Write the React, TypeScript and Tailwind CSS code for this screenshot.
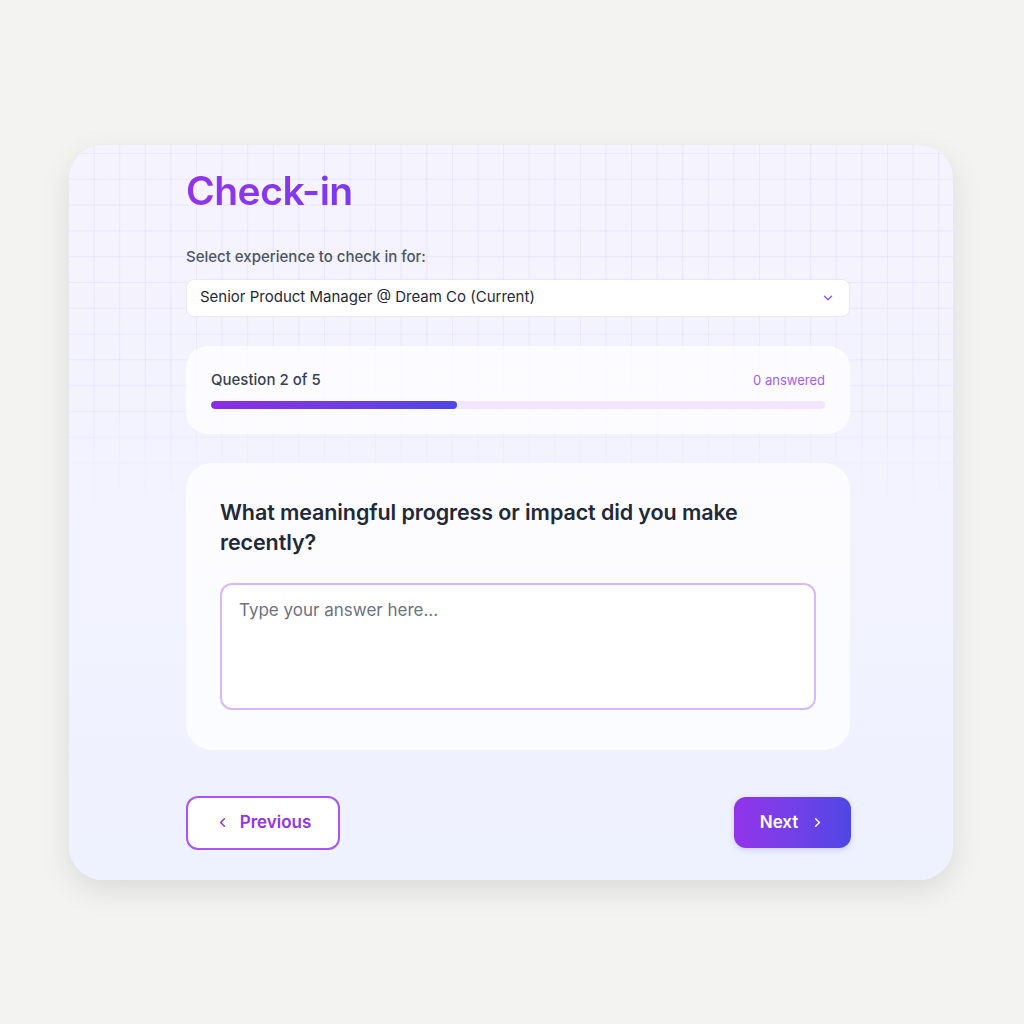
import React from "react";

const ChevronDown = ({ className }: { className?: string }) => (
  <svg className={className} viewBox="0 0 24 24" fill="none" stroke="currentColor" strokeWidth={2.5} strokeLinecap="round" strokeLinejoin="round">
    <path d="m6 9 6 6 6-6" />
  </svg>
);
const ChevronLeft = ({ className }: { className?: string }) => (
  <svg className={className} viewBox="0 0 24 24" fill="none" stroke="currentColor" strokeWidth={2.5} strokeLinecap="round" strokeLinejoin="round">
    <path d="m15 18-6-6 6-6" />
  </svg>
);
const ChevronRight = ({ className }: { className?: string }) => (
  <svg className={className} viewBox="0 0 24 24" fill="none" stroke="currentColor" strokeWidth={2.5} strokeLinecap="round" strokeLinejoin="round">
    <path d="m9 18 6-6-6-6" />
  </svg>
);

export default function App() {
  return (
    <div
      className="min-h-[1024px] w-full bg-[#f3f3f2] flex items-center justify-center"
      style={{ fontFamily: "Inter, 'Noto Sans', sans-serif" }}
    >
      <div className="relative w-[884px] h-[735px] mr-[2px] rounded-[34px] overflow-hidden bg-gradient-to-b from-[#f5f3fe] to-[#eef2fe] shadow-[0_10px_30px_rgba(0,0,0,0.10)]">
        <div
          className="absolute inset-x-0 top-0 h-[370px] pointer-events-none [background-image:linear-gradient(to_right,rgba(139,92,246,0.08)_1px,transparent_1px),linear-gradient(to_bottom,rgba(139,92,246,0.08)_1px,transparent_1px)] [background-size:25.6px_25.8px] [background-position:-1px_8px] [mask-image:linear-gradient(to_bottom,black_60%,transparent)]"
        />
        <div className="relative flex flex-col pl-[117px] pr-[103px] pt-[22px]">
          <h1 className="text-[39px] leading-[48px] font-semibold tracking-[-0.5px] bg-gradient-to-r from-[#9333ea] to-[#7c3aed] bg-clip-text text-transparent self-start">
            Check-in
          </h1>
          <label className="mt-[32px] text-[15px] leading-[20px] font-medium text-[#4b5563]">
            Select experience to check in for:
          </label>
          <div className="mt-[12px] h-[38px] rounded-lg bg-white border border-[#ece6fb] flex items-center justify-between pl-[13px] pr-[14px]">
            <span className="text-[15px] text-[#1f2937]">Senior Product Manager @ Dream Co (Current)</span>
            <ChevronDown className="w-[14px] h-[14px] text-[#8b5cf6]" />
          </div>

          <div className="mt-[29px] rounded-[22px] bg-white/75 p-[25px] flex flex-col">
            <div className="flex items-center justify-between h-[20px]">
              <span className="text-[15px] font-medium text-[#374151]">Question 2 of 5</span>
              <span className="text-[13px] text-[#a35cf0]">0 answered</span>
            </div>
            <div className="mt-[10px] h-[8px] rounded-full bg-[#f1e6fd] overflow-hidden">
              <div className="h-full w-[40%] rounded-full bg-gradient-to-r from-[#8b2be2] to-[#4f46e5]" />
            </div>
          </div>

          <div className="mt-[29px] h-[287px] rounded-[26px] bg-white/75 pt-[34px] px-[34px] pb-[40px] flex flex-col">
            <h2 className="max-w-[560px] text-[21.5px] leading-[30px] font-semibold text-[#1f2937] tracking-[-0.1px]">
              What meaningful progress or impact did you make recently?
            </h2>
            <textarea
              className="mt-[26px] h-[127px] w-full resize-none rounded-[12px] border-2 border-[#d7b8fc] bg-white px-[17px] pt-[13px] text-[17px] leading-[24px] text-[#1f2937] placeholder:text-[#6b7280] outline-none"
              placeholder="Type your answer here..."
            />
          </div>

          <div className="mt-[46px] flex items-center justify-between">
            <button className="h-[54px] w-[154px] rounded-[12px] border-2 border-[#a855f7] bg-white flex items-center justify-center gap-[10px] text-[17px] font-semibold text-[#9333ea]">
              <ChevronLeft className="w-[15px] h-[15px]" />
              <span>Previous</span>
            </button>
            <button className="mr-[-1px] h-[51px] w-[117px] rounded-[12px] bg-gradient-to-r from-[#9333ea] to-[#4f46e5] flex items-center justify-center gap-[12px] text-[17px] font-semibold text-white shadow-[0_2px_6px_rgba(99,102,241,0.25)]">
              <span>Next</span>
              <ChevronRight className="w-[15px] h-[15px]" />
            </button>
          </div>
        </div>
      </div>
    </div>
  );
}
